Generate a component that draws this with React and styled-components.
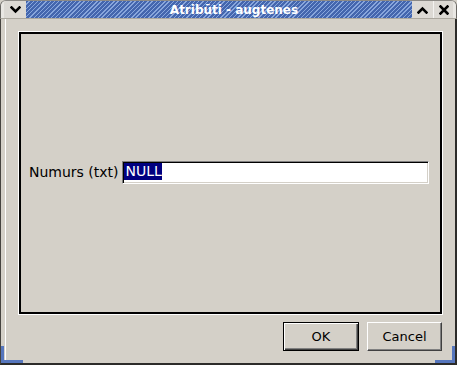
import React from "react";
import styled, { createGlobalStyle } from "styled-components";

const Global = createGlobalStyle`
  html, body { margin: 0; padding: 0; background: #ffffff; }
  body { font-family: "DejaVu Sans", "Liberation Sans", sans-serif; }
`;

const Window = styled.div`
  position: relative;
  width: 457px;
  height: 365px;
  display: flex;
  flex-direction: column;
  background: #d4d0c8;
  box-sizing: border-box;
`;

const TitleBar = styled.div`
  display: flex;
  height: 19px;
  box-sizing: border-box;
  border-bottom: 1px solid #aca89f;
  border-radius: 6px 6px 0 0;
  overflow: hidden;
  background: #dedbd6;
  border-top: 1px solid #8c8a86;
  border-left: 1px solid #6a6864;
  border-right: 1px solid #6a6864;
`;

const Cap = styled.div`
  width: ${(p) => p.$w}px;
  background: #e9e7e3;
`;

const TitleButton = styled.div`
  width: ${(p) => p.$w}px;
  display: flex;
  align-items: center;
  justify-content: center;
  background: #dcd9d4;
  border-left: ${(p) => (p.$sep ? "1px solid #f4f3f1" : "none")};
`;

const Caption = styled.div`
  flex: 1;
  display: flex;
  align-items: center;
  justify-content: center;
  padding-left: 30px;
  color: #ffffff;
  font-weight: bold;
  font-size: 12px;
  background:
    repeating-linear-gradient(135deg, #4466ae 0 2px, #88a6dc 2px 3px);
  border-top: 1px solid #2e4c8e;
  margin-top: -1px;
`;

const Frame = styled.div`
  flex: 1;
  display: flex;
  border-left: 1px solid #45433f;
  border-right: 2px solid #2c2b29;
  border-bottom: 2px solid #2c2b29;
  padding: 0 3px 3px 4px;
`;

const Content = styled.div`
  flex: 1;
  display: flex;
  flex-direction: column;
  border-left: 1px solid #ffffff;
  padding: 0 10px 9px 13px;
`;

const Panel = styled.div`
  margin-top: 13px;
  height: 282px;
  box-sizing: border-box;
  border: 2px solid #000000;
  box-shadow: 0 0 0 1px #ffffff;
  display: flex;
  align-items: center;
  padding: 0 11px 0 8px;
`;

const Field = styled.div`
  flex: 1;
  display: flex;
  align-items: center;
  gap: 3px;
  margin-top: -2px;
`;

const Label = styled.span`
  font-size: 14px;
  color: #000;
  white-space: nowrap;
`;

const TextBox = styled.div`
  flex: 1;
  height: 23px;
  box-sizing: border-box;
  background: #ffffff;
  border-top: 1px solid #808080;
  border-left: 1px solid #808080;
  border-bottom: 1px solid #ffffff;
  border-right: 1px solid #ffffff;
  box-shadow: inset 1px 1px 0 #000000, inset -1px -1px 0 #d4d0c8;
  padding: 1px 0 0 1px;
  display: flex;
  align-items: flex-start;
`;

const Selected = styled.span`
  background: #000080;
  color: #ffffff;
  font-size: 14px;
  line-height: 17px;
  padding: 0 0 0 2px;
`;

const Buttons = styled.div`
  display: flex;
  justify-content: flex-end;
  gap: 8px;
  margin-top: 8px;
`;

const Button = styled.div`
  width: ${(p) => p.$w}px;
  height: 29px;
  box-sizing: border-box;
  display: flex;
  align-items: center;
  justify-content: center;
  font-size: 13px;
  color: #000;
  ${(p) =>
    p.$default
      ? `border: 1px solid #000000;
         box-shadow: inset 1px 1px 0 #ffffff, inset -1px -1px 0 #404040, inset -2px -2px 0 #808080;`
      : `border-top: 1px solid #ffffff;
         border-left: 1px solid #ffffff;
         border-right: 1px solid #404040;
         border-bottom: 1px solid #404040;
         box-shadow: inset -1px -1px 0 #808080;`}
`;

const Grip = styled.div`
  position: absolute;
  bottom: 2px;
  ${(p) => (p.$right ? "right: 2px;" : "left: 1px;")}
  width: ${(p) => p.$w}px;
  height: 17px;
  ${(p) =>
    p.$right
      ? "border-right: 3px solid #5676bd; border-bottom: 3px solid #5676bd;"
      : "border-left: 3px solid #5676bd; border-bottom: 3px solid #5676bd;"}
  box-sizing: border-box;
  pointer-events: none;
`;

const Chevron = ({ up }) => (
  <svg width="11" height="8" viewBox="0 0 11 8">
    <polyline
      points={up ? "1.5,6.5 5.5,2.5 9.5,6.5" : "1.5,1.5 5.5,5.5 9.5,1.5"}
      fill="none"
      stroke="#000"
      strokeWidth="2.6"
      strokeLinecap="square"
    />
  </svg>
);

const CloseIcon = () => (
  <svg width="10" height="10" viewBox="0 0 10 10">
    <path d="M1.5 1.5 L8.5 8.5 M8.5 1.5 L1.5 8.5" stroke="#000" strokeWidth="2.6" strokeLinecap="square" />
  </svg>
);

export default function App() {
  return (
    <>
      <Global />
      <Window>
        <TitleBar>
          <Cap $w={3} />
          <TitleButton $w={22}>
            <Chevron />
          </TitleButton>
          <Caption>Atribūti - augtenes</Caption>
          <TitleButton $w={21}>
            <Chevron up />
          </TitleButton>
          <TitleButton $w={19} $sep>
            <CloseIcon />
          </TitleButton>
          <Cap $w={3} />
        </TitleBar>
        <Frame>
          <Content>
            <Panel>
              <Field>
                <Label>Numurs (txt)</Label>
                <TextBox>
                  <Selected>NULL</Selected>
                </TextBox>
              </Field>
            </Panel>
            <Buttons>
              <Button $w={76} $default>OK</Button>
              <Button $w={75}>Cancel</Button>
            </Buttons>
          </Content>
        </Frame>
        <Grip $w={22} />
        <Grip $w={20} $right />
      </Window>
    </>
  );
}
